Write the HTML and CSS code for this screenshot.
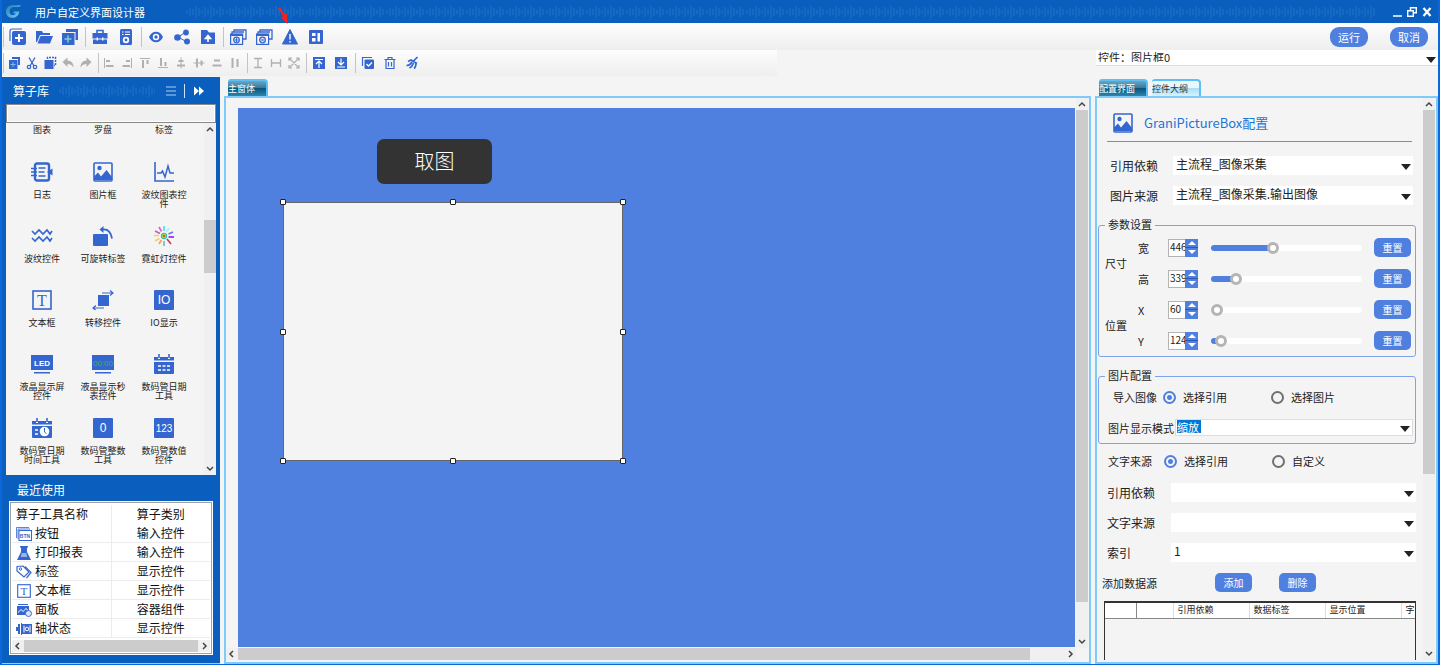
FILE: index.html
```html
<!DOCTYPE html>
<html lang="zh-CN">
<head>
    <meta charset="UTF-8">
    <meta name="viewport" content="width=device-width, initial-scale=1.0">
    <title>用户自定义界面设计器</title>
    <link rel="stylesheet" href="styles.css">
</head>
<body>
    <!-- Icon sprite -->
    <svg class="sprite" aria-hidden="true">
        <defs>
            <pattern id="wave" width="40" height="16" patternUnits="userSpaceOnUse">
                <path d="M1 6v4M4 4v8M7 5v6M10 2v12M13 4v8M16 6v4M19 3v10M22 5v6M25 2v12M28 4v8M31 6v4M34 3v10M37 5v6" stroke="#6fb4ff" stroke-opacity=".22"/>
            </pattern>
            <linearGradient id="logoFill" x1="0" y1="0" x2="1" y2="1">
                <stop offset="0" stop-color="#1d7fb8"/>
                <stop offset="1" stop-color="#7fd0ee"/>
            </linearGradient>
        </defs>

        <!-- main toolbar -->
        <symbol id="i-new" viewBox="0 0 18 18"><path d="M1 13V3a2 2 0 0 1 2-2h10" fill="none" stroke="currentColor" stroke-width="1.2"/><rect x="3" y="3" width="14" height="14" rx="2" fill="currentColor"/><path d="M10 6v8M6 10h8" stroke="#fff" stroke-width="2"/></symbol>
        <symbol id="i-open" viewBox="0 0 18 18"><path d="M1 14V3h6l1 2h7v2H5L2 14z" fill="currentColor"/><path d="M5.500 8H18l-3 7.500H2.500z" fill="currentColor"/></symbol>
        <symbol id="i-copyadd" viewBox="0 0 18 18"><path d="M5 1h12v11h-2.500V4H5z" fill="currentColor"/><rect x="1" y="5" width="12.500" height="12" fill="currentColor"/><path d="M7 7.500v7M3.500 11h7" stroke="#7fd0c8" stroke-width="1.500"/></symbol>
        <symbol id="i-case" viewBox="0 0 18 18"><path d="M6 5V2.500h6V5" fill="none" stroke="currentColor" stroke-width="1.600"/><path d="M1.500 5h15v5.500h-4V9.500h-1.500v1H7v-1H5.500v1h-4zM2 11.500h3.500v1H7v-1h4v1h1.500v-1H16V16H2z" fill="currentColor"/></symbol>
        <symbol id="i-doccfg" viewBox="0 0 18 18"><rect x="3" y="1" width="12" height="16" rx="1.500" fill="currentColor"/><path d="M5 4h1.500M8 4h5M5 6.500h1.500M8 6.500h5" stroke="#fff"/><circle cx="9" cy="12" r="2.300" fill="none" stroke="#fff" stroke-width="1.800"/></symbol>
        <symbol id="i-eye" viewBox="0 0 18 18"><path d="M2 9c3-7 11-7 14 0-3 7-11 7-14 0z" fill="currentColor"/><circle cx="9" cy="9" r="3.200" fill="#fff"/><circle cx="9" cy="9" r="1.700" fill="currentColor"/></symbol>
        <symbol id="i-share" viewBox="0 0 18 18"><path d="M13 4 5 9l9 5" fill="none" stroke="currentColor"/><circle cx="4.500" cy="9.500" r="3.300" fill="currentColor"/><circle cx="13" cy="4.500" r="2.900" fill="currentColor"/><circle cx="14" cy="13.500" r="3" fill="currentColor"/></symbol>
        <symbol id="i-folderup" viewBox="0 0 18 18"><path d="M2 2h6l2 2.500h6V16H2z" fill="currentColor"/><path d="M9 14V9M6.500 10.500 9 7.500l2.500 3z" stroke="#fff" stroke-width="1.600" fill="#fff"/></symbol>
        <symbol id="i-winadd" viewBox="0 0 18 18"><path d="M5 4V2h12v9h-3M3 6V4h12" fill="none" stroke="currentColor" stroke-width="1.300"/><rect x="1.600" y="6" width="12" height="10.400" fill="none" stroke="currentColor" stroke-width="1.200"/><path d="M1 6h13v2H1z" fill="currentColor"/><circle cx="7.500" cy="12" r="2.800" fill="none" stroke="currentColor" stroke-width="1.300"/><path d="M7.500 10v4M5.500 12h4" stroke="currentColor"/></symbol>
        <symbol id="i-windel" viewBox="0 0 18 18"><path d="M5 4V2h12v9h-3M3 6V4h12" fill="none" stroke="currentColor" stroke-width="1.300"/><rect x="1.600" y="6" width="12" height="10.400" fill="none" stroke="currentColor" stroke-width="1.200"/><path d="M1 6h13v2H1z" fill="currentColor"/><circle cx="7.500" cy="12" r="2.800" fill="none" stroke="currentColor" stroke-width="1.300"/><path d="m6 10.500 3 3m0-3-3 3" stroke="currentColor"/></symbol>
        <symbol id="i-warn" viewBox="0 0 18 18"><path d="M9 1.500 16.500 16h-15z" fill="currentColor" stroke="currentColor" stroke-linejoin="round"/><path d="M9 6v5.500M9 13v1.500" stroke="#fff" stroke-width="1.400"/></symbol>
        <symbol id="i-layout" viewBox="0 0 18 18"><rect x="2" y="2" width="14" height="14" rx="1" fill="currentColor"/><path d="M5 5h3.500v3H5zM5 10h3.500v3.500H5zM10.500 5H13v8.500h-2.500z" fill="#fff"/></symbol>
        <symbol id="i-redarrow" viewBox="0 0 12 18"><path d="m1 1 2-.500 5 7 2-.500.500 10L4 10.500 6 9z" fill="#f5221b"/></symbol>

        <!-- edit toolbar -->
        <symbol id="i-copy" viewBox="0 0 14 14"><path d="M5 1h8v8h-2V3H5z" fill="currentColor"/><rect x="2" y="4" width="8.500" height="9" fill="currentColor"/><path d="M6 6v5M3.500 8.500h5" stroke="#7fb8e8"/></symbol>
        <symbol id="i-cut" viewBox="0 0 14 14"><path d="M4 1.500 9 10M10 1.500 5 10" stroke="currentColor" stroke-width="1.300"/><circle cx="4" cy="11" r="1.700" fill="none" stroke="currentColor" stroke-width="1.200"/><circle cx="10" cy="11" r="1.700" fill="none" stroke="currentColor" stroke-width="1.200"/></symbol>
        <symbol id="i-paste" viewBox="0 0 14 14"><rect x="1.500" y="4" width="9" height="9" fill="currentColor"/><path d="M4.500 3V1.500h8v8H11" fill="none" stroke="currentColor" stroke-width="1.500" stroke-dasharray="2 1"/></symbol>
        <symbol id="i-undo" viewBox="0 0 14 14"><path d="m1.500 6 5-4.500v3c4 0 6 3 6 7C11 9 9 8 6.500 8v3z" fill="currentColor"/></symbol>
        <symbol id="i-redo" viewBox="0 0 14 14"><path d="m12.500 6-5-4.500v3c-4 0-6 3-6 7C3 9 5 8 7.500 8v3z" fill="currentColor"/></symbol>
        <symbol id="i-al" viewBox="0 0 14 14"><path d="M2.500 2v10" stroke="currentColor"/><path d="M4 5h4M4 10h7.500" stroke="currentColor" stroke-width="2"/></symbol>
        <symbol id="i-ar" viewBox="0 0 14 14"><path d="M11.500 2v10" stroke="currentColor"/><path d="M6 5h4M2.500 10H10" stroke="currentColor" stroke-width="2"/></symbol>
        <symbol id="i-at" viewBox="0 0 14 14"><path d="M2 2.500h10" stroke="currentColor"/><path d="M5 4v8M9.500 4v4" stroke="currentColor" stroke-width="2"/></symbol>
        <symbol id="i-ab" viewBox="0 0 14 14"><path d="M2 11.500h10" stroke="currentColor"/><path d="M5 2v8M9.500 6v4" stroke="currentColor" stroke-width="2"/></symbol>
        <symbol id="i-ach" viewBox="0 0 14 14"><path d="M7 1.500v11" stroke="currentColor"/><path d="M4.500 5h5M3 9.500h8" stroke="currentColor" stroke-width="2"/></symbol>
        <symbol id="i-acv" viewBox="0 0 14 14"><path d="M1.500 7h11" stroke="currentColor"/><path d="M5 2.500v9M9.500 4.500v5" stroke="currentColor" stroke-width="2"/></symbol>
        <symbol id="i-dv" viewBox="0 0 14 14"><path d="M4 4.500h6M2.500 9.500h9" stroke="currentColor" stroke-width="2"/></symbol>
        <symbol id="i-dh" viewBox="0 0 14 14"><path d="M4.500 2v10M9.500 3v8" stroke="currentColor" stroke-width="2"/></symbol>
        <symbol id="i-sh" viewBox="0 0 14 14"><path d="M3 2.500h8M3 11.500h8M7 3v8" stroke="currentColor" stroke-width="1.300"/></symbol>
        <symbol id="i-sw" viewBox="0 0 14 14"><path d="M2.500 3v8M11.500 3v8M3 7h8" stroke="currentColor" stroke-width="1.300"/></symbol>
        <symbol id="i-sb" viewBox="0 0 14 14"><path d="m2 2 10 10M12 2 2 12M2 5V2h3M9 2h3v3M12 9v3H9M5 12H2V9" fill="none" stroke="currentColor" stroke-width="1.200"/></symbol>
        <symbol id="i-top" viewBox="0 0 14 14"><rect x="1" y="1" width="12" height="12" fill="currentColor"/><path d="M3 3.500h8M7 12V5.500M4 8l3-3 3 3" fill="none" stroke="#fff" stroke-width="1.200"/></symbol>
        <symbol id="i-bottom" viewBox="0 0 14 14"><rect x="1" y="1" width="12" height="12" fill="currentColor"/><path d="M3 11h8M7 2.500V9M4 6l3 3 3-3" fill="none" stroke="#fff" stroke-width="1.200"/></symbol>
        <symbol id="i-check" viewBox="0 0 14 14"><path d="M1.500 10V1.500H11" fill="none" stroke="currentColor" stroke-width="1.200"/><rect x="3.500" y="3.500" width="9.500" height="9.500" rx="1" fill="currentColor"/><path d="m5.500 8 2 2L11 6.500" fill="none" stroke="#fff" stroke-width="1.300"/></symbol>
        <symbol id="i-trash" viewBox="0 0 14 14"><path d="M1.500 3.500h11M5 3V1.500h4V3M3 4v8.500h8V4M5.500 6v4.500M8.500 6v4.500" fill="none" stroke="currentColor" stroke-width="1.200"/></symbol>
        <symbol id="i-clean" viewBox="0 0 14 14"><path d="m12.500 1-4 4M3 5.500 6 4l6 3.500M1.500 9.500c3 0 4-1 5.500-3.500M4.500 12c2-1 3-2 4-5M9 12.500c1.500-1 2-3 2-5.500" fill="none" stroke="currentColor" stroke-width="1.700"/></symbol>

        <!-- component library -->
        <symbol id="c-log" viewBox="0 0 22 20"><rect x="4" y="1.500" width="14" height="17" rx="2" fill="none" stroke="currentColor" stroke-width="2.400"/><path d="M7.500 6h7M7.500 10h6M7.500 14h7" stroke="currentColor" stroke-width="1.500"/><path d="M0 6.500h6M0 10h6M0 13.500h6" stroke="currentColor" stroke-width="1.500"/><path d="m16 10 5.500-3.500v7z" fill="currentColor"/></symbol>
        <symbol id="c-pic" viewBox="0 0 20 20"><rect x="1" y="1" width="18" height="18" rx="1" fill="none" stroke="currentColor" stroke-width="1.600"/><circle cx="6.500" cy="6" r="2.200" fill="currentColor"/><path d="M1 18v-3.500l4-4 3 4L13.500 8 19 15v3z" fill="currentColor"/></symbol>
        <symbol id="c-chart" viewBox="0 0 20 20"><path d="M1 0v19h19" fill="none" stroke="currentColor" stroke-width="1.600"/><path d="M3 11h4l1.500-2 2.500 6 3-11 2 7h4" fill="none" stroke="currentColor" stroke-width="1.500"/></symbol>
        <symbol id="c-wave" viewBox="0 0 22 20"><path d="m1 5 3 3 4-4 4 4 4-4 3 4 2-3M1 12l3 3 4-4 4 4 4-4 3 4 2-3" fill="none" stroke="currentColor" stroke-width="1.600"/></symbol>
        <symbol id="c-rotate" viewBox="0 0 20 20"><rect x="0" y="8" width="15" height="12" rx="1" fill="currentColor"/><path d="M9 3.500c6-1 9 3 10 9" fill="none" stroke="currentColor" stroke-width="1.800"/><path d="m6.500 3.500 4-3.500v7z" fill="currentColor"/></symbol>
        <symbol id="c-neon" viewBox="0 0 20 20"><g stroke-width="1.600"><path d="M10 0v5" stroke="#3fe0ee"/><path d="m15 2-2.500 4" stroke="#a8f2f4"/><path d="m19 6-4.500 2" stroke="#5b7cf0"/><path d="M20 11h-5.500" stroke="#8a1ee8"/><path d="m17 18-4-5" stroke="#c23a5b"/><path d="M10 15v5" stroke="#67b8c8"/><path d="m5 18 2.500-4" stroke="#f39a68"/><path d="m1 15 4.500-2.500" stroke="#f5cf6a"/><path d="M0 9.500h5" stroke="#f1d36f"/><path d="m1 5 5 2.500" stroke="#c05ad0"/><path d="m5 1 2.500 4.500" stroke="#e45fc0"/></g><circle cx="10" cy="10" r="3.200" fill="#2bc4b0"/><circle cx="10" cy="10" r="2.200" fill="#b6d92c"/><circle cx="10" cy="10" r="1.200" fill="#e6502c"/></symbol>
        <symbol id="c-move" viewBox="0 0 22 20"><rect x="6" y="5" width="11" height="11" fill="currentColor"/><path d="M10 3h11M18 .500 21 3l-3 2.500M12 18H1M4 15.500 1 18l3 2.500" fill="none" stroke="currentColor" stroke-width="1.200"/></symbol>
        <symbol id="c-cal" viewBox="0 0 20 20"><path d="M0 3h4v2h2V3h8v2h2V3h4v3.500H0zM0 8h20v11q0 1-1 1H1q-1 0-1-1z" fill="currentColor"/><path d="M5 0v4M15 0v4" stroke="currentColor" stroke-width="1.600"/><path d="M4 12h12M4 16h12" stroke="#fff" stroke-width="1.600" stroke-dasharray="3 1.500"/></symbol>
        <symbol id="c-caltime" viewBox="0 0 20 20"><path d="M0 3h4v2h2V3h8v2h2V3h4v3.500H0zM0 8h20v11q0 1-1 1H1q-1 0-1-1z" fill="currentColor"/><path d="M5 0v4M15 0v4" stroke="currentColor" stroke-width="1.600"/><path d="M3 12h3M3 16h3" stroke="#fff" stroke-width="1.600"/><circle cx="12.500" cy="13.500" r="4.800" fill="#fff"/><path d="M12.500 10v4l2 1.500" fill="none" stroke="currentColor"/></symbol>

        <!-- recent list -->
        <symbol id="r-print" viewBox="0 0 16 14"><path d="M4 0h8v1.500h-1V6l4 8H1l4-8V1.500H4z" fill="currentColor"/><path d="M5.500 8h5M5 10h6" stroke="#fff"/></symbol>
        <symbol id="r-tag" viewBox="0 0 16 14"><path d="M1 1.500 7 1l6 6-5 5-7-6z" fill="none" stroke="currentColor" stroke-width="1.200"/><path d="m9 1.500 6 6-4.500 5.500" fill="none" stroke="currentColor" stroke-width="1.200"/><circle cx="4.500" cy="4" r="1.200" fill="none" stroke="currentColor"/></symbol>
        <symbol id="r-panel" viewBox="0 0 16 14"><path d="M2 1.500h10" stroke="currentColor"/><path d="M1 3h12v9H1z" fill="currentColor"/><path d="M2 11V9l3-3 2 2 3-3 2 2v4z" fill="#fff"/><path d="M2 11v-1l3-3 2 2 3-3 2 2v3z" fill="currentColor"/><circle cx="12.500" cy="10.500" r="3" fill="#dfe8fb" stroke="currentColor"/></symbol>
        <symbol id="r-axis" viewBox="0 0 16 14"><path d="M0 5h2v4H0zM2 2h2v10H2zM5 1h1v12H5z" fill="currentColor"/><path d="M6 2h10v10H6z" fill="currentColor"/><path d="M8 3.500v7M14 3.500v7" stroke="#fff"/><circle cx="11" cy="7" r="1.800" fill="none" stroke="#fff"/></symbol>
    </svg>

    <div class="app">
        <header class="titlebar">
            <svg class="logo" viewBox="0 0 20 16"><path d="M18 1H9C4 1 1 4 1 8s3 7 7 7c4 0 7-2 8-7h-6l-1 2h3c-1 2-2 2-4 2-2 0-3-2-3-4 0-3 2-5 5-5h6z" fill="url(#logoFill)"/></svg>
            <h1 class="app-title">用户自定义界面设计器</h1>
            <svg class="title-wave"><rect width="100%" height="16" fill="url(#wave)"/></svg>
            <div class="window-buttons">
                <button aria-label="最小化"><svg viewBox="0 0 10 10"><path d="M1 9h9" stroke="#fff" stroke-width="1.500"/></svg></button>
                <button aria-label="还原"><svg viewBox="0 0 10 10"><path d="M3.500 3V.700h5.800v5H7M.700 3.700h5.600v5.600H.700z" fill="none" stroke="#fff" stroke-width="1.400"/></svg></button>
                <button aria-label="关闭"><svg viewBox="0 0 10 10"><path d="m1.500 1 7 8M8.500 1l-7 8" stroke="#fff" stroke-width="2.200"/></svg></button>
            </div>
        </header>

        <div class="toolbar toolbar-main">
            <div class="tool-group">
                <button aria-label="新建"><svg><use href="#i-new"/></svg></button>
                <button aria-label="打开"><svg><use href="#i-open"/></svg></button>
                <button aria-label="另存"><svg><use href="#i-copyadd"/></svg></button>
            </div>
            <div class="tool-group">
                <button aria-label="工具箱"><svg><use href="#i-case"/></svg></button>
                <button aria-label="文档设置"><svg><use href="#i-doccfg"/></svg></button>
            </div>
            <div class="tool-group">
                <button aria-label="预览"><svg><use href="#i-eye"/></svg></button>
                <button aria-label="共享"><svg><use href="#i-share"/></svg></button>
                <button aria-label="导出"><svg><use href="#i-folderup"/></svg></button>
            </div>
            <div class="tool-group">
                <button aria-label="添加窗体"><svg><use href="#i-winadd"/></svg></button>
                <button aria-label="删除窗体"><svg><use href="#i-windel"/></svg></button>
                <button class="warn-button" aria-label="报警"><svg><use href="#i-warn"/></svg><svg class="pointer"><use href="#i-redarrow"/></svg></button>
                <button aria-label="布局"><svg><use href="#i-layout"/></svg></button>
            </div>
            <div class="run-buttons">
                <button class="pill">运行</button>
                <button class="pill">取消</button>
            </div>
        </div>

        <div class="second-row">
            <div class="toolbar toolbar-edit">
                <div class="tool-group">
                    <button aria-label="复制"><svg><use href="#i-copy"/></svg></button>
                    <button aria-label="剪切"><svg><use href="#i-cut"/></svg></button>
                    <button aria-label="粘贴"><svg><use href="#i-paste"/></svg></button>
                    <button class="off" aria-label="撤销"><svg><use href="#i-undo"/></svg></button>
                    <button class="off" aria-label="重做"><svg><use href="#i-redo"/></svg></button>
                </div>
                <div class="tool-group">
                    <button class="off" aria-label="左对齐"><svg><use href="#i-al"/></svg></button>
                    <button class="off" aria-label="右对齐"><svg><use href="#i-ar"/></svg></button>
                    <button class="off" aria-label="上对齐"><svg><use href="#i-at"/></svg></button>
                    <button class="off" aria-label="下对齐"><svg><use href="#i-ab"/></svg></button>
                    <button class="off" aria-label="水平居中"><svg><use href="#i-ach"/></svg></button>
                    <button class="off" aria-label="垂直居中"><svg><use href="#i-acv"/></svg></button>
                    <button class="off" aria-label="垂直分布"><svg><use href="#i-dv"/></svg></button>
                    <button class="off" aria-label="水平分布"><svg><use href="#i-dh"/></svg></button>
                </div>
                <div class="tool-group">
                    <button class="off" aria-label="等高"><svg><use href="#i-sh"/></svg></button>
                    <button class="off" aria-label="等宽"><svg><use href="#i-sw"/></svg></button>
                    <button class="off" aria-label="等大小"><svg><use href="#i-sb"/></svg></button>
                </div>
                <div class="tool-group wide">
                    <button aria-label="置顶"><svg><use href="#i-top"/></svg></button>
                    <button aria-label="置底"><svg><use href="#i-bottom"/></svg></button>
                </div>
                <div class="tool-group wide">
                    <button aria-label="全选"><svg><use href="#i-check"/></svg></button>
                    <button aria-label="删除"><svg><use href="#i-trash"/></svg></button>
                    <button aria-label="清空"><svg><use href="#i-clean"/></svg></button>
                </div>
            </div>
            <div class="select-box widget-select">
                <select aria-label="控件"><option>控件：图片框0</option></select>
            </div>
        </div>

        <main class="workspace">
            <!-- Component library -->
            <aside class="library">
                <div class="library-header">
                    <h2>算子库</h2>
                    <svg class="library-wave"><rect width="100%" height="16" fill="url(#wave)"/></svg>
                    <button aria-label="菜单"><svg viewBox="0 0 10 10"><path d="M0 1h10M0 5h10M0 9h10" stroke="#a9cdf2" stroke-width="1.200"/></svg></button>
                    <span class="divider"></span>
                    <button aria-label="收起"><svg viewBox="0 0 10 10"><path d="M0 .500 5 5 0 9.500zM5 .500 10 5 5 9.500z" fill="#fff"/></svg></button>
                </div>
                <input class="library-search" type="text" aria-label="搜索算子">
                <div class="palette">
                    <ul class="palette-grid">
                        <li class="cut">图表</li>
                        <li class="cut">罗盘</li>
                        <li class="cut">标签</li>
                        <li><svg><use href="#c-log"/></svg>日志</li>
                        <li><svg><use href="#c-pic"/></svg>图片框</li>
                        <li><svg><use href="#c-chart"/></svg>波纹图表控件</li>
                        <li><svg><use href="#c-wave"/></svg>波纹控件</li>
                        <li><svg><use href="#c-rotate"/></svg>可旋转标签</li>
                        <li><svg><use href="#c-neon"/></svg>霓虹灯控件</li>
                        <li><svg viewBox="0 0 22 20"><rect x="2" y="1" width="18" height="18" fill="none" stroke="currentColor" stroke-width="1.600"/><text x="11" y="16" class="glyph-t">T</text></svg>文本框</li>
                        <li><svg><use href="#c-move"/></svg>转移控件</li>
                        <li><svg viewBox="0 0 22 20"><rect x="1" width="20" height="20" rx="1" fill="currentColor"/><text x="11" y="14" class="glyph-io">IO</text></svg>IO显示</li>
                        <li><svg viewBox="0 0 22 20"><path d="M0 1h22v15H0zM3 18h16v1.500H3z" fill="currentColor"/><text x="11" y="12" class="glyph-led">LED</text></svg>液晶显示屏控件</li>
                        <li><svg viewBox="0 0 22 20"><path d="M0 1h22v15H0zM3 18h16v1.500H3z" fill="currentColor"/><text x="11" y="12" class="glyph-timer">00:00</text></svg>液晶显示秒表控件</li>
                        <li><svg><use href="#c-cal"/></svg>数码管日期工具</li>
                        <li><svg><use href="#c-caltime"/></svg>数码管日期时间工具</li>
                        <li><svg viewBox="0 0 22 20"><rect x="1" width="20" height="20" rx="1" fill="currentColor"/><text x="11" y="14" class="glyph-io">0</text></svg>数码管整数工具</li>
                        <li><svg viewBox="0 0 22 20"><rect x="1" width="20" height="20" rx="1" fill="currentColor"/><text x="11" y="14" class="glyph-num">123</text></svg>数码管数值控件</li>
                    </ul>
                    <div class="scroll-v">
                        <svg viewBox="0 0 12 12"><path d="m3 8 3-3 3 3"/></svg>
                        <div class="track track-palette"><div class="thumb"></div></div>
                        <svg viewBox="0 0 12 12"><path d="m3 4 3 3 3-3"/></svg>
                    </div>
                </div>

                <section class="recent">
                    <h2>最近使用</h2>
                    <div class="recent-box">
                        <table class="recent-table">
                            <thead>
                                <tr><th>算子工具名称</th><th>算子类别</th></tr>
                            </thead>
                            <tbody>
                                <tr><td><svg viewBox="0 0 16 14"><path d="M.500 11V.500H13M2 12V2h12" fill="none" stroke="currentColor" stroke-width=".8"/><rect x="3" y="3.500" width="12.500" height="10" fill="none" stroke="currentColor"/><text x="9" y="11" class="glyph-btn">BTN</text></svg>按钮</td><td>输入控件</td></tr>
                                <tr><td><svg><use href="#r-print"/></svg>打印报表</td><td>输入控件</td></tr>
                                <tr><td><svg><use href="#r-tag"/></svg>标签</td><td>显示控件</td></tr>
                                <tr><td><svg viewBox="0 0 22 20"><rect x="2" y="1" width="18" height="18" fill="none" stroke="currentColor" stroke-width="1.600"/><text x="11" y="16" class="glyph-t">T</text></svg>文本框</td><td>显示控件</td></tr>
                                <tr><td><svg><use href="#r-panel"/></svg>面板</td><td>容器组件</td></tr>
                                <tr><td><svg><use href="#r-axis"/></svg>轴状态</td><td>显示控件</td></tr>
                            </tbody>
                        </table>
                        <div class="scroll-h">
                            <svg viewBox="0 0 12 12"><path d="M7 3 4 6l3 3"/></svg>
                            <div class="track"><div class="thumb"></div></div>
                            <svg viewBox="0 0 12 12"><path d="m5 3 3 3-3 3"/></svg>
                        </div>
                    </div>
                </section>
            </aside>

            <!-- Design canvas -->
            <section class="designer">
                <div class="tabs"><button class="tab active">主窗体</button></div>
                <div class="pane designer-pane">
                    <div class="canvas">
                        <button class="canvas-button">取图</button>
                        <div class="canvas-picture">
                            <i class="handle nw"></i><i class="handle n"></i><i class="handle ne"></i>
                            <i class="handle w"></i><i class="handle e"></i>
                            <i class="handle sw"></i><i class="handle s"></i><i class="handle se"></i>
                        </div>
                    </div>
                    <div class="scroll-v">
                        <svg viewBox="0 0 12 12"><path d="m3 8 3-3 3 3"/></svg>
                        <div class="track track-canvas"><div class="thumb"></div></div>
                        <svg viewBox="0 0 12 12"><path d="m3 4 3 3 3-3"/></svg>
                    </div>
                    <div class="scroll-h">
                        <svg viewBox="0 0 12 12"><path d="M7 3 4 6l3 3"/></svg>
                        <div class="track track-canvas"><div class="thumb"></div></div>
                        <svg viewBox="0 0 12 12"><path d="m5 3 3 3-3 3"/></svg>
                    </div>
                </div>
            </section>

            <!-- Property panel -->
            <section class="properties">
                <div class="tabs">
                    <button class="tab active">配置界面</button>
                    <button class="tab">控件大纲</button>
                </div>
                <div class="pane properties-pane">
                    <form class="config">
                        <div class="config-title">
                            <svg><use href="#c-pic"/></svg>
                            <h2>GraniPictureBox配置</h2>
                        </div>
                        <div class="field inset">
                            <label for="dep">引用依赖</label>
                            <div class="select-box"><select id="dep"><option>主流程_图像采集</option></select></div>
                        </div>
                        <div class="field inset">
                            <label for="src">图片来源</label>
                            <div class="select-box"><select id="src"><option>主流程_图像采集.输出图像</option></select></div>
                        </div>

                        <fieldset class="params">
                            <legend>参数设置</legend>
                            <div class="param-group">
                                <span class="group-name">尺寸</span>
                                <div class="param">
                                    <label for="w">宽</label>
                                    <span class="spinner"><input id="w" type="text" value="446"><span class="steps"><button type="button" aria-label="加"></button><button type="button" aria-label="减"></button></span></span>
                                    <input type="range" aria-label="宽" value="40" style="--fill: 40%">
                                    <button type="button" class="btn">重置</button>
                                </div>
                                <div class="param">
                                    <label for="h">高</label>
                                    <span class="spinner"><input id="h" type="text" value="339"><span class="steps"><button type="button" aria-label="加"></button><button type="button" aria-label="减"></button></span></span>
                                    <input type="range" aria-label="高" value="14" style="--fill: 14%">
                                    <button type="button" class="btn">重置</button>
                                </div>
                            </div>
                            <div class="param-group">
                                <span class="group-name">位置</span>
                                <div class="param">
                                    <label for="x">X</label>
                                    <span class="spinner"><input id="x" type="text" value="60"><span class="steps"><button type="button" aria-label="加"></button><button type="button" aria-label="减"></button></span></span>
                                    <input type="range" aria-label="X" value="0" style="--fill: 0%">
                                    <button type="button" class="btn">重置</button>
                                </div>
                                <div class="param">
                                    <label for="y">Y</label>
                                    <span class="spinner"><input id="y" type="text" value="124"><span class="steps"><button type="button" aria-label="加"></button><button type="button" aria-label="减"></button></span></span>
                                    <input type="range" aria-label="Y" value="3" style="--fill: 3%">
                                    <button type="button" class="btn">重置</button>
                                </div>
                            </div>
                        </fieldset>

                        <fieldset class="picture">
                            <legend>图片配置</legend>
                            <div class="radio-row">
                                <span class="radio-name">导入图像</span>
                                <label><input type="radio" name="import" checked>选择引用</label>
                                <label><input type="radio" name="import">选择图片</label>
                            </div>
                            <div class="mode-row">
                                <label for="mode">图片显示模式</label>
                                <div class="select-box mode-select">
                                    <input id="mode" type="text" value="缩放" role="combobox">
                                </div>
                            </div>
                        </fieldset>

                        <div class="radio-row outer">
                            <span class="radio-name">文字来源</span>
                            <label><input type="radio" name="text" checked>选择引用</label>
                            <label><input type="radio" name="text">自定义</label>
                        </div>
                        <div class="field">
                            <label for="dep2">引用依赖</label>
                            <div class="select-box"><select id="dep2"><option></option></select></div>
                        </div>
                        <div class="field">
                            <label for="src2">文字来源</label>
                            <div class="select-box"><select id="src2"><option></option></select></div>
                        </div>
                        <div class="field">
                            <label for="idx">索引</label>
                            <div class="select-box"><select id="idx"><option>1</option></select></div>
                        </div>
                        <div class="source-row">
                            <span>添加数据源</span>
                            <button type="button" class="btn">添加</button>
                            <button type="button" class="btn">删除</button>
                        </div>
                        <div class="source-box">
                            <table class="source-table">
                                <thead>
                                    <tr><th></th><th></th><th>引用依赖</th><th>数据标签</th><th>显示位置</th><th>字</th></tr>
                                </thead>
                            </table>
                        </div>
                    </form>
                    <div class="scroll-v">
                        <svg viewBox="0 0 12 12"><path d="m3 8 3-3 3 3"/></svg>
                        <div class="track track-config"><div class="thumb"></div></div>
                        <svg viewBox="0 0 12 12"><path d="m3 4 3 3 3-3"/></svg>
                    </div>
                </div>
            </section>
        </main>
    </div>
</body>
</html>
```

FILE: styles.css
```css
/* Basic Reset */
* {
    margin: 0;
    padding: 0;
    box-sizing: border-box;
}

body {
    font-family: "Noto Sans CJK SC", sans-serif;
    font-size: 11px;
    line-height: 14px;
    color: #222222;
    background-color: #f4f4f4;
}

button,
input,
select {
    font: inherit;
    color: inherit;
    border: none;
    background: none;
}

h1,
h2 {
    font-weight: 400;
}

ul {
    list-style: none;
}

.sprite {
    position: absolute;
    width: 0;
    height: 0;
}

.app {
    display: flex;
    flex-direction: column;
    height: 100vh;
    border: solid #0b68dc;
    border-width: 0 2px 1px;
    overflow: hidden;
}

/* Title bar */
.titlebar {
    display: flex;
    align-items: center;
    height: 23px;
    margin: 0 -2px;
    padding: 0 8px 0 5px;
    background-color: #0a5fbe;
    color: #ffffff;
    flex: none;
}

.logo {
    width: 18px;
    height: 15px;
}

.app-title {
    font-size: 11px;
    margin-left: 12px;
}

.title-wave {
    flex: 1;
    height: 16px;
    margin: 0 16px 0 41px;
}

.window-buttons {
    display: flex;
    gap: 5px;
}

.window-buttons button,
.window-buttons svg {
    display: block;
    width: 10px;
    height: 10px;
}

/* Toolbars */
.toolbar {
    display: flex;
    align-items: center;
    background: linear-gradient(#fdfdfd, #eeeeee);
    color: #3566d0;
}

.toolbar-main {
    height: 27px;
    flex: none;
}

.tool-group {
    display: flex;
    align-items: center;
    height: 20px;
    padding-left: 1px;
    margin-left: 2px;
    border-left: 1px solid #c4c4c4;
}

.toolbar-edit .tool-group {
    padding-right: 1px;
}

.toolbar .tool-group:first-child {
    margin-left: 1px;
}

.tool-group button {
    display: flex;
    justify-content: center;
    align-items: center;
    width: 26px;
    height: 20px;
}

.tool-group svg {
    width: 18px;
    height: 18px;
}

.toolbar-edit button {
    width: 18px;
}

.toolbar-edit .wide button {
    width: 22px;
}

.toolbar-edit svg {
    width: 14px;
    height: 14px;
}

.tool-group .off {
    color: #b0b0b0;
}

.warn-button {
    position: relative;
}

.tool-group .pointer {
    position: absolute;
    left: 0;
    top: -20px;
    width: 12px;
    height: 18px;
}

.run-buttons {
    display: flex;
    gap: 22px;
    margin-left: auto;
    padding-right: 10px;
}

.pill {
    width: 38px;
    height: 20px;
    border-radius: 9px;
    background-color: #4f7fdf;
    color: #ffffff;
}

.second-row {
    display: flex;
    justify-content: space-between;
    align-items: flex-start;
    height: 27px;
    flex: none;
}

.toolbar-edit {
    width: 54%;
    height: 26px;
}

/* Drop-downs */
.select-box {
    position: relative;
    flex: 1;
    height: 19px;
    background-color: #ffffff;
}

.select-box::after {
    content: "";
    position: absolute;
    right: 2px;
    top: 8px;
    border: 5px solid transparent;
    border-top: 6px solid #222222;
    border-bottom: none;
    pointer-events: none;
}

.select-box select,
.select-box input {
    display: block;
    appearance: none;
    width: 100%;
    height: 100%;
    padding: 0 14px 3px 3px;
    outline: none;
    font-size: 12px;
}

.widget-select {
    flex: none;
    width: 342px;
    height: 16px;
    border-bottom: 1px solid #dddddd;
}

.widget-select select {
    font-size: 11px;
    padding-left: 2px;
}

.widget-select::after {
    top: 7px;
}

/* Workspace */
.workspace {
    display: grid;
    grid-template-columns: 218px minmax(0, 1fr) 343px;
    column-gap: 4px;
    flex: 1;
    min-height: 0;
}

/* Component library */
.library {
    display: flex;
    flex-direction: column;
    min-height: 0;
    padding: 0 4px 6px;
    border-bottom: 1px solid #8fd0ff;
    background-color: #0a5fbe;
}

.library-header {
    display: flex;
    align-items: center;
    height: 27px;
    padding: 0 12px 0 7px;
    color: #ffffff;
    flex: none;
}

.library-header h2 {
    font-size: 12px;
}

.library-wave {
    flex: 1;
    height: 16px;
    margin: 0 11px 0 10px;
}

.library-header button,
.library-header button svg {
    display: block;
    width: 10px;
    height: 10px;
}

.divider {
    width: 1px;
    height: 14px;
    margin: 0 9px 0 8px;
    background-color: #d0e4f8;
}

.library-search {
    height: 19px;
    border: 1px solid #888888;
    outline: 1px solid #ffffff;
    outline-offset: -2px;
    background-color: #f0f0f0;
    flex: none;
}

.palette {
    display: flex;
    flex: 1;
    min-height: 0;
    background-color: #f4f4f4;
}

.palette-grid {
    display: grid;
    grid-template-columns: repeat(3, 61px);
    grid-template-rows: 27px;
    grid-auto-rows: 64px;
    flex: 1;
    justify-content: center;
    padding-right: 4px;
    overflow: hidden;
    font-size: 9px;
    line-height: 9px;
    text-align: center;
}

.palette-grid li {
    padding: 12px 6px 0;
}

.palette-grid .cut {
    padding-top: 2px;
}

.palette-grid svg {
    display: block;
    width: 22px;
    height: 20px;
    margin: 0 auto 8px;
    color: #3566d0;
}

/* Text inside icons */
.glyph-t,
.glyph-io,
.glyph-led,
.glyph-timer,
.glyph-num,
.glyph-btn {
    text-anchor: middle;
    fill: #ffffff;
    font-family: "Liberation Sans", sans-serif;
}

.glyph-t {
    font-family: "Liberation Serif", serif;
    font-size: 16px;
    fill: #3566d0;
}

.glyph-io {
    font-size: 12px;
}

.glyph-led {
    font-size: 8px;
    font-weight: 700;
}

.glyph-timer {
    font-size: 8px;
    fill: #3fae55;
}

.glyph-num {
    font-size: 10px;
}

.glyph-btn {
    font-size: 5px;
    font-weight: 700;
    fill: #3566d0;
}

/* Scroll bars */
.scroll-v,
.scroll-h {
    display: flex;
    background-color: #f0f0f0;
}

.scroll-v {
    flex-direction: column;
    width: 12px;
}

.scroll-h {
    height: 12px;
}

.scroll-v svg,
.scroll-h svg {
    width: 12px;
    height: 12px;
    flex: none;
    fill: none;
    stroke: #444444;
    stroke-width: 1.5;
}

.track {
    display: flex;
    flex: 1;
}

.scroll-v .track {
    flex-direction: column;
}

.thumb {
    flex: 1;
    background-color: #cccccc;
}

.track-palette {
    padding: 85px 0 190px;
}

.scroll-v .track-canvas {
    padding-bottom: 34px;
}

.scroll-h .track-canvas {
    padding-right: 34px;
}

.track-config {
    padding-bottom: 174px;
}

/* Recently used */
.recent {
    margin-top: 3px;
    padding: 0 4px 3px;
    flex: none;
}

.recent h2 {
    height: 24px;
    padding-left: 7px;
    font-size: 12px;
    line-height: 24px;
    color: #ffffff;
}

.recent-box {
    padding: 2px 1px 1px;
    border: 1px solid #a0a0a0;
    outline: 1px solid #ffffff;
    background-color: #ffffff;
}

.recent-table {
    width: 100%;
    table-layout: fixed;
    border-collapse: collapse;
    font-size: 12px;
    line-height: 18px;
    color: #111111;
    margin-bottom: 2px;
}

.recent-table th,
.recent-table td {
    height: 19px;
    font-weight: 400;
    text-align: center;
    white-space: nowrap;
    border-bottom: 1px solid #ececec;
}

.recent-table th {
    border-bottom: none;
}

.recent-table th:first-child,
.recent-table td:first-child {
    padding-left: 4px;
    text-align: left;
    border-right: 1px solid #ececec;
}

.recent-table svg {
    width: 16px;
    height: 14px;
    margin-right: 3px;
    color: #3566d0;
    vertical-align: -3px;
}

/* Tabs and panes */
.designer,
.properties {
    display: flex;
    flex-direction: column;
    min-height: 0;
}

.tabs {
    display: flex;
    gap: 4px;
    height: 19px;
    padding: 2px 4px 0;
    flex: none;
}

.tab {
    height: 17px;
    padding-right: 11px;
    border: solid #5cc0f5;
    border-width: 2px 2px 0 0;
    border-radius: 3px 4px 0 0;
    background: linear-gradient(#e8f8ff 50%, #a9def8 50%, #d8f2ff);
    font-size: 9px;
    line-height: 14px;
    color: #333333;
}

.tab.active {
    background: linear-gradient(#6fa5bd, #2f7698 50%, #07567f 50%, #2e86aa);
    color: #ffffff;
}

.pane {
    flex: 1;
    min-height: 0;
    border: 2px solid #7ecbfa;
}

.designer-pane {
    display: grid;
    grid-template-columns: minmax(0, 1fr) 12px;
    grid-template-rows: minmax(0, 1fr) 12px;
    padding-bottom: 2px;
    padding-right: 1px;
}

.canvas {
    position: relative;
    margin: 10px 1px 1px 12px;
    background-color: #4f7fdf;
    overflow: hidden;
}

.canvas-button {
    position: absolute;
    left: 139px;
    top: 31px;
    width: 115px;
    height: 45px;
    padding-bottom: 2px;
    border-radius: 7px;
    background-color: #333333;
    color: #ffffff;
    font-size: 20px;
    font-weight: 300;
}

.canvas-picture {
    position: absolute;
    left: 45px;
    top: 94px;
    width: 340px;
    height: 259px;
    border: 1px solid #666666;
    background-color: #f4f4f4;
}

.handle {
    position: absolute;
    width: 6px;
    height: 6px;
    border: 1px solid #222222;
    border-radius: 1px;
    background-color: #ffffff;
}

.nw,
.n,
.ne {
    top: -4px;
}

.sw,
.s,
.se {
    bottom: -4px;
}

.nw,
.w,
.sw {
    left: -4px;
}

.ne,
.e,
.se {
    right: -4px;
}

.n,
.s {
    left: calc(50% - 3px);
}

.w,
.e {
    top: calc(50% - 3px);
}

/* Property panel */
.properties-pane {
    display: flex;
    padding: 0 1px 2px 0;
}

.config {
    display: flex;
    flex-direction: column;
    flex: 1;
    min-width: 0;
    padding: 0 7px 0 1px;
    overflow: hidden;
}

.config-title {
    display: flex;
    align-items: center;
    gap: 11px;
    height: 44px;
    margin: 0 4px 14px 9px;
    padding: 7px 6px 0;
    border-bottom: 1px solid #5f8fe6;
    flex: none;
}

.config-title svg {
    width: 20px;
    height: 20px;
    color: #3566d0;
}

.config-title h2 {
    font-size: 13px;
    color: #1f74d4;
}

.field {
    display: flex;
    align-items: center;
    height: 19px;
    margin-bottom: 11px;
    padding-left: 9px;
    font-size: 12px;
    flex: none;
}

.field label {
    width: 64px;
}

.field.inset {
    padding: 0 3px 0 12px;
}

.field.inset label {
    width: 63px;
}

fieldset {
    border: 1px solid #7ea3ec;
    border-radius: 3px;
    flex: none;
}

legend {
    padding: 0 3px 2px;
    line-height: 12px;
}

.params {
    margin-top: 2px;
    padding: 0 4px 0 6px;
}

.param-group {
    display: grid;
    grid-template-columns: 33px 1fr;
    align-items: center;
}

.group-name {
    grid-row: 1 / 3;
}

.param {
    display: flex;
    align-items: center;
    height: 31px;
}

.param label {
    width: 30px;
}

.spinner {
    display: flex;
    width: 30px;
    height: 18px;
    border: 1px solid #b4b4b4;
    border-right: none;
    background-color: #ffffff;
}

.spinner input {
    flex: 1;
    min-width: 0;
    padding: 0 0 2px 1px;
    font-size: 10px;
}

.steps {
    display: flex;
    flex-direction: column;
    gap: 1px;
    width: 13px;
    margin: -1px 0;
    background-color: #2c58b0;
}

.steps button {
    display: flex;
    flex: 1;
    align-items: center;
    justify-content: center;
    background-color: #4f7fdf;
}

.steps button::before {
    content: "";
    border: 4px solid transparent;
    border-bottom-color: #ffffff;
    border-top: none;
}

.steps button:last-child::before {
    border-top: 4px solid #ffffff;
    border-bottom: none;
}

input[type="range"] {
    appearance: none;
    flex: 1;
    min-width: 0;
    height: 12px;
    margin: 0 12px 0 13px;
}

input[type="range"]::-webkit-slider-runnable-track {
    height: 6px;
    border-radius: 3px;
    background: linear-gradient(to right, #4f7fdf var(--fill), #ffffff var(--fill));
}

input[type="range"]::-webkit-slider-thumb {
    appearance: none;
    width: 12px;
    height: 12px;
    margin-top: -3px;
    border: 3px solid #b4b4b4;
    border-radius: 50%;
    background-color: #ffffff;
}

.btn {
    width: 37px;
    height: 19px;
    border-radius: 5px;
    background-color: #4f7fdf;
    color: #ffffff;
    font-size: 10px;
}

.picture {
    margin-top: 12px;
    padding: 0 2px 7px 6px;
}

.radio-row {
    display: flex;
    align-items: center;
    height: 28px;
    padding-left: 8px;
    flex: none;
}

.radio-name {
    width: 50px;
}

.radio-row label {
    display: flex;
    align-items: center;
    gap: 7px;
    width: 108px;
}

input[type="radio"] {
    appearance: none;
    width: 13px;
    height: 13px;
    border: 2px solid #707070;
    border-radius: 50%;
}

input[type="radio"]:checked {
    border-color: #4f7fdf;
    background: radial-gradient(#4f7fdf 2px, transparent 3px);
}

.radio-row.outer {
    height: 34px;
    margin-bottom: 5px;
    padding-left: 10px;
}

.radio-row.outer .radio-name {
    width: 56px;
}

.mode-row {
    display: flex;
    align-items: center;
    margin-top: 8px;
    padding-left: 3px;
}

.mode-row label {
    width: 67px;
}

.mode-select {
    height: 17px;
    border: 1px solid #dddddd;
}

.mode-select::after {
    top: 6px;
}

.mode-select input {
    flex: none;
    width: 24px;
    height: 13px;
    margin-left: 1px;
    padding: 0;
    background-color: #0078d7;
    color: #ffffff;
    font-size: 11px;
}

.source-row {
    display: flex;
    align-items: center;
    height: 19px;
    margin-bottom: 9px;
    padding-left: 4px;
    flex: none;
}

.source-row span {
    width: 113px;
}

.source-row .btn {
    margin-right: 27px;
}

.source-box {
    flex: 1;
    min-height: 0;
    margin-left: 6px;
    border: solid #333333;
    border-width: 2px 1px 0;
    overflow: hidden;
}

.source-table {
    width: 100%;
    table-layout: fixed;
    border-collapse: collapse;
    font-size: 9px;
    background-color: #ffffff;
}

.source-table th {
    width: 76px;
    height: 15px;
    padding-left: 4px;
    font-weight: 400;
    line-height: 12px;
    text-align: left;
    border-right: 1px solid #dddddd;
    border-bottom: 1px solid #888888;
}

.source-table th:first-child {
    width: 31px;
    border-right-color: #888888;
}

.source-table th:nth-child(2) {
    width: 37px;
}

.source-table th:last-child {
    width: auto;
    border-right: none;
}
```
